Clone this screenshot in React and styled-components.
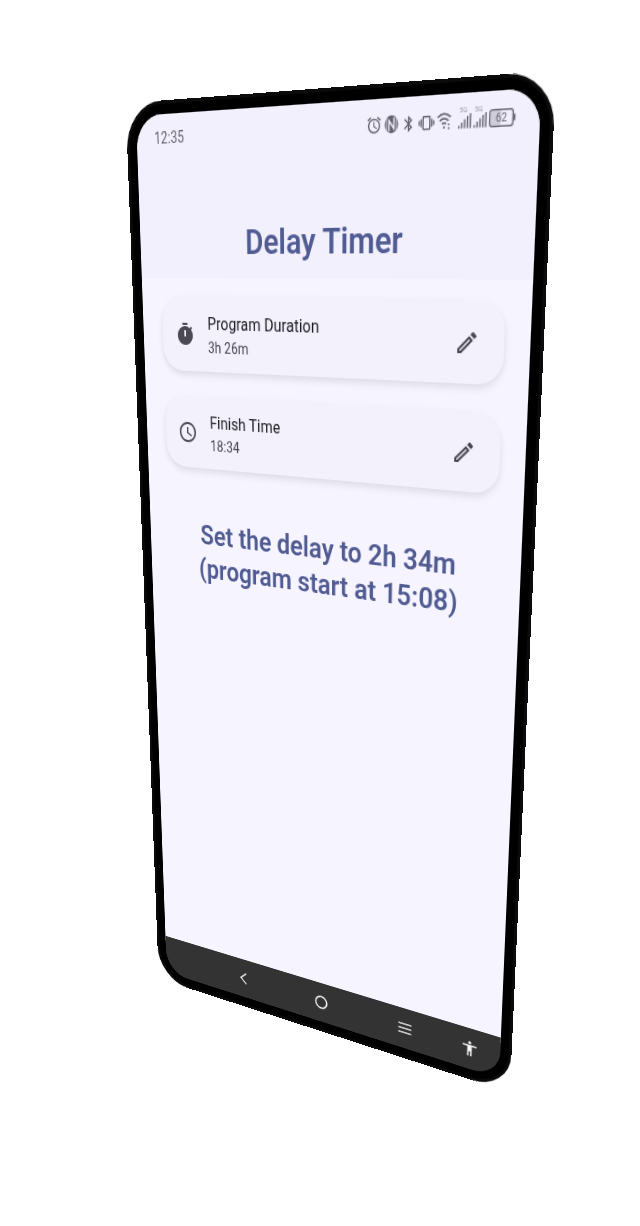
import React from "react";
import styled, { createGlobalStyle } from "styled-components";
import {
  MdAccessibility,
  MdAlarm,
  MdBluetooth,
  MdOutlineEdit,
  MdSchedule,
  MdTimer,
  MdVibration,
} from "react-icons/md";

const color = {
  header: "#f3f0fe",
  screen: "#f6f4fe",
  card: "#f3f1fb",
  primary: "#505b92",
  text: "#1c1b22",
  muted: "#494853",
  status: "#64626e",
  nav: "#333333",
};

const GlobalStyle = createGlobalStyle`
  *, *::before, *::after { box-sizing: border-box; }
  body { margin: 0; background: #fff; }
  h1, h2, p { margin: 0; font-weight: inherit; }
  button { margin: 0; padding: 0; border: 0; background: none; color: inherit; font: inherit; cursor: pointer; }
  svg { display: block; flex: none; }
`;

const Stage = styled.main`
  display: flex;
  justify-content: center;
  align-items: flex-start;
  min-height: 100vh;
  padding-top: 104px;
  overflow: hidden;
  font-family: Roboto, "Liberation Sans", sans-serif;
`;

/* The handset is laid out flat and then turned in space as one object. */
const Phone = styled.section`
  flex: none;
  padding: 9px;
  border: 3px solid #0b0b0b;
  border-radius: 42px;
  background: #000;
  transform-origin: 12px 12px;
  transform: matrix3d(
    0.820571, -0.058397, 0, -0.0003825,
    0.045158, 1.122502, 0, 0.00021849,
    0, 0, 1, 0,
    22, 0, 0, 1
  );
`;

/* The dark foot of the gradient sits under the nav bar, so no light edge shows at its corners. */
const Screen = styled.div`
  display: flex;
  flex-direction: column;
  width: 412px;
  height: 915px;
  border-radius: 30px;
  overflow: hidden;
  background: linear-gradient(to top, ${color.nav} 40px, ${color.screen} 40px);
  color: ${color.text};
`;

const Header = styled.header`
  height: 149px;
  display: flex;
  flex-direction: column;
  justify-content: space-between;
  padding-bottom: 12px;
  background: ${color.header};
`;

const StatusBar = styled.div`
  display: flex;
  align-items: center;
  justify-content: space-between;
  height: 42px;
  padding: 0 21px;
  color: ${color.status};
  font-size: 14px;
  line-height: 20px;
`;

const StatusIcons = styled.div`
  display: flex;
  align-items: center;
  gap: 2px;
`;

const Title = styled.h1`
  color: ${color.primary};
  font-size: 31px;
  line-height: 40px;
  font-weight: 600;
  text-align: center;
`;

const Content = styled.div`
  flex: 1;
  display: flex;
  flex-direction: column;
  gap: 25px;
  padding: 18px 24px 0;
`;

const Card = styled.article`
  display: flex;
  align-items: center;
  gap: 15px;
  height: 70px;
  padding: 0 11px 0 15px;
  border-radius: 24px;
  background: ${color.card};
  box-shadow: 0 4px 6px rgba(60, 60, 90, 0.1), 0 1px 8px rgba(60, 60, 90, 0.04);
`;

const CardIcon = styled.span`
  color: ${color.muted};
`;

const CardText = styled.div`
  flex: 1;
`;

const CardTitle = styled.h2`
  font-size: 16px;
  line-height: 24px;
`;

const CardValue = styled.p`
  color: ${color.muted};
  font-size: 14px;
  line-height: 20px;
`;

const EditButton = styled.button`
  display: grid;
  place-items: center;
  width: 48px;
  height: 48px;
  color: ${color.muted};
`;

const Message = styled.p`
  margin-top: 26px;
  color: ${color.primary};
  font-size: 27px;
  line-height: 35px;
  font-weight: 600;
  text-align: center;
`;

const NavBar = styled.nav`
  display: grid;
  grid-template-columns: 1fr 100px 100px 100px 1fr;
  height: 46px;
  background: ${color.nav};
  color: #f4f4f4;
`;

const NavButton = styled.button`
  display: grid;
  place-items: center;
  ${(p) => (p.$first ? "grid-column: 2;" : "")}
  ${(p) => (p.$edge ? "width: 46px;" : "")}
`;

const NfcIcon = () => (
  <svg width="14" height="16" viewBox="0 0 14 16" role="img" aria-label="NFC">
    <ellipse cx="7" cy="8" rx="6.500" ry="7.200" fill="currentColor" />
    <path d="M4.600 13.500V5l4.800 6.500V2.500" fill="none" stroke={color.header} strokeWidth="1.300" />
    <path d="M2.300 3v10M11.700 3v10" stroke={color.header} strokeWidth="0.700" />
  </svg>
);

const WifiIcon = () => (
  <svg width="18" height="16" viewBox="0 0 18 16" fill="none" stroke="currentColor" strokeWidth="1.400" role="img" aria-label="Wi-Fi">
    <path d="M0.800 5Q7-.6 13.200 5M2.800 7.800Q7 4 11.200 7.800M5 10.300Q7 8.600 9 10.300" />
    <circle cx="7" cy="13" r="0.900" fill="currentColor" stroke="none" />
    <path d="M11.400 10v1.600M11.400 13v1.600" />
  </svg>
);

const SignalIcon = () => (
  <svg width="12" height="24" viewBox="0 0 12 24" fill="none" stroke="currentColor" role="img" aria-label="5G signal">
    <path d="M.8 18.500v-2M3.400 18.500v-4.500M6 18.500v-7M8.600 18.500v-9.500M11.200 18.500V7" strokeWidth="1.300" />
    <text x="1" y="6" fontSize="6" fill="currentColor" stroke="none" opacity="0.600">5G</text>
  </svg>
);

const BatteryIcon = () => (
  <svg width="24" height="14" viewBox="0 0 24 14" role="img" aria-label="Battery">
    <rect x="1.500" y="1.500" width="9" height="11" fill="currentColor" opacity="0.250" />
    <rect x="0.700" y="0.700" width="20.600" height="12.600" rx="2" fill="none" stroke="currentColor" strokeWidth="1.200" />
    <path d="M22.600 4.500v5" stroke="currentColor" strokeWidth="1.600" />
    <text x="11" y="10.200" fontSize="9" textAnchor="middle" fill="currentColor">62</text>
  </svg>
);

const NavIcon = styled.svg.attrs({ viewBox: "0 0 16 16", "aria-hidden": true })`
  width: 16px;
  height: 16px;
  fill: none;
  stroke: currentColor;
  stroke-width: 1.700;
`;

function SettingCard({ icon: Icon, title, value }) {
  return (
    <Card>
      <CardIcon>
        <Icon size={24} />
      </CardIcon>
      <CardText>
        <CardTitle>{title}</CardTitle>
        <CardValue>{value}</CardValue>
      </CardText>
      <EditButton type="button" aria-label={`Edit ${title}`}>
        <MdOutlineEdit size={24} />
      </EditButton>
    </Card>
  );
}

export default function App() {
  return (
    <>
      <GlobalStyle />
      <Stage>
        <Phone>
          <Screen>
            <Header>
              <StatusBar>
                <span>12:35</span>
                <StatusIcons>
                  <MdAlarm size={16} />
                  <NfcIcon />
                  <MdBluetooth size={15} />
                  <MdVibration size={15} />
                  <WifiIcon />
                  <SignalIcon />
                  <SignalIcon />
                  <BatteryIcon />
                </StatusIcons>
              </StatusBar>
              <Title>Delay Timer</Title>
            </Header>
            <Content>
              <SettingCard icon={MdTimer} title="Program Duration" value="3h 26m" />
              <SettingCard icon={MdSchedule} title="Finish Time" value="18:34" />
              <Message>
                Set the delay to 2h 34m
                <br />
                (program start at 15:08)
              </Message>
            </Content>
            <NavBar>
              <NavButton type="button" aria-label="Back" $first>
                <NavIcon>
                  <path d="M12 1.500 5 8l7 6.500" />
                </NavIcon>
              </NavButton>
              <NavButton type="button" aria-label="Home">
                <NavIcon>
                  <circle cx="8" cy="8" r="6.800" />
                </NavIcon>
              </NavButton>
              <NavButton type="button" aria-label="Recent apps">
                <NavIcon>
                  <path d="M0.500 3h15M0.500 8h15M0.500 13h15" />
                </NavIcon>
              </NavButton>
              <NavButton type="button" aria-label="Accessibility" $edge>
                <MdAccessibility size={20} />
              </NavButton>
            </NavBar>
          </Screen>
        </Phone>
      </Stage>
    </>
  );
}
